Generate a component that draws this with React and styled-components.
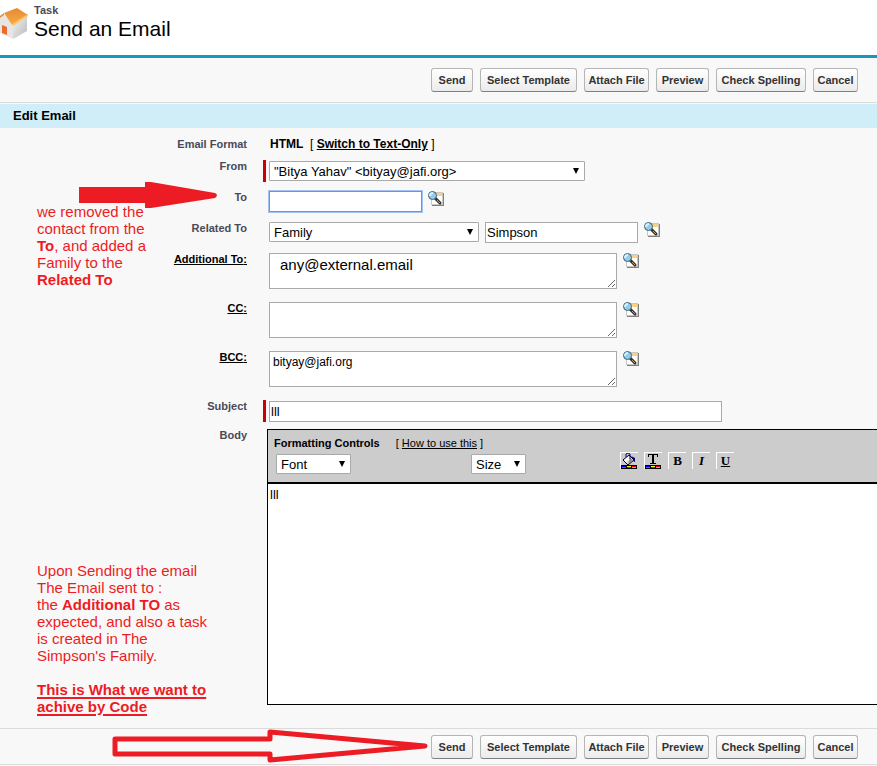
import styled, { createGlobalStyle } from "styled-components";

const GlobalStyle = createGlobalStyle`
  *, *::before, *::after {
    box-sizing: border-box;
  }

  body {
    margin: 0;
    background: #f8f8f8;
    color: #000;
    font-family: Arial, "Liberation Sans", sans-serif;
    font-size: 12px;
  }

  button, input, select, textarea {
    margin: 0;
    font-family: inherit;
  }
`;

const RED = "#ed1c24";

const PageHeader = styled.header`
  display: flex;
  align-items: flex-start;
  gap: 6px;
  height: 58px;
  padding-top: 4px;
  background: #fff;
  border-bottom: 3px solid #1797c0;
`;

const HouseSvg = styled.svg`
  flex: none;
  width: 28px;
  height: 36px;
`;

const PageType = styled.div`
  font-size: 11px;
  font-weight: bold;
  line-height: 13px;
  color: #4a4a56;
`;

const PageTitle = styled.h1`
  margin: 0;
  font-size: 21px;
  font-weight: normal;
  line-height: 24px;
`;

const ButtonBar = styled.div`
  position: relative;
  display: flex;
  justify-content: flex-end;
  gap: 7px;
  padding: ${({ $bottom }) => ($bottom ? "6px 19px 5px" : "10px 19px")};
  border-top: ${({ $bottom }) => ($bottom ? "1px solid #dbdbdb" : "none")};
  border-bottom: 1px solid #dbdbdb;
`;

const BarButton = styled.button`
  height: 24px;
  min-width: ${({ $width }) => $width}px;
  padding: 0 3px;
  border: 1px solid #b5b5b5;
  border-bottom-color: #7f7f7f;
  border-radius: 3px;
  background: linear-gradient(#fff, #ebebeb);
  color: #333;
  font-size: 11px;
  font-weight: bold;
  white-space: nowrap;
`;

const SectionTitle = styled.h2`
  margin: 1px 0 0;
  padding: 0 13px;
  background: #cfeef8;
  font-size: 13px;
  line-height: 24px;
`;

const Form = styled.form`
  position: relative;
  padding: 10px 0 23px;
`;

const Row = styled.div`
  display: grid;
  grid-template-columns: 247px minmax(0, 1fr);
  column-gap: 16px;
  min-height: ${({ $height }) => $height || 22}px;
  margin-bottom: ${({ $space = 9 }) => $space}px;
`;

const Label = styled.label`
  color: #4a4a56;
  font-size: 11px;
  font-weight: bold;
  line-height: 13px;
  text-align: right;
`;

const LabelLink = styled.a`
  color: #000;
`;

const Field = styled.div`
  display: flex;
  align-items: ${({ $required }) => ($required ? "center" : "flex-start")};
  gap: 6px;
  padding-left: ${({ $wide }) => ($wide ? 1 : 3)}px;
  border-left: 3px solid ${({ $required }) => ($required ? "#c00" : "transparent")};
`;

const Format = styled.div`
  padding-left: 1px;
  font-weight: bold;
  line-height: 13px;

  span {
    font-weight: normal;
  }

  a {
    color: #000;
  }
`;

const SelectBox = styled.span`
  position: relative;
  display: block;
  width: ${({ $width }) => $width}px;

  &::after {
    content: "";
    position: absolute;
    top: 7px;
    right: 6px;
    border: 3px solid transparent;
    border-top: 6px solid #000;
    border-bottom: 0;
    pointer-events: none;
  }

  select {
    display: block;
    width: 100%;
    height: 20px;
    padding: 0 16px 0 4px;
    border: 1px solid #a9a9a9;
    border-radius: 1px;
    background: #fff;
    color: #000;
    font-size: 13px;
    appearance: none;
  }
`;

const Input = styled.input`
  width: ${({ $width }) => $width}px;
  max-width: 100%;
  height: 21px;
  padding: 0 1px;
  border: 1px solid ${({ $active }) => ($active ? "#6a94d8" : "#a9a9a9")};
  box-shadow: ${({ $active }) => ($active ? "0 0 0 1px #a5c3f3" : "none")};
  background: #fff;
  color: #000;
  font-size: 13px;
`;

const Recipients = styled.textarea`
  width: 348px;
  height: 36px;
  padding: ${({ $large }) => ($large ? "3px 10px" : "2px 3px")};
  border: 1px solid #a9a9a9;
  background: #fff;
  color: #000;
  font-size: ${({ $large }) => ($large ? 15 : 12)}px;
  line-height: 16px;
  overflow: hidden;
`;

const IconButton = styled.button`
  flex: none;
  width: 16px;
  height: 16px;
  padding: 0;
  border: 0;
  background: none;

  svg {
    display: block;
  }
`;

const Editor = styled.div`
  flex: 1;
  min-width: 0;
  border: 1px solid #000;
  border-right: 0;
`;

const Toolbar = styled.div`
  padding: 6px 0 8px;
  background: #ccc;
  border-bottom: 2px solid #000;
`;

const ToolbarTitle = styled.div`
  display: flex;
  gap: 16px;
  padding: 0 6px;
  font-size: 11px;
  line-height: 14px;

  a {
    color: #000;
  }
`;

const Controls = styled.div`
  display: grid;
  grid-template-columns: 195px 149px auto;
  height: 24px;
  padding: 2px 8px 0;

  > span {
    align-self: end;
  }
`;

const Formats = styled.div`
  display: flex;
  gap: 6px;
`;

const FormatButton = styled.button`
  width: 18px;
  height: 17px;
  padding: 0;
  border: 0;
  border-top: 1px solid #fff;
  border-left: 1px solid #fff;
  background: none;
  color: #000;
  font-family: "Liberation Serif", serif;
  font-size: 13px;
  font-weight: bold;
  font-style: ${({ $italic }) => ($italic ? "italic" : "normal")};
  line-height: 16px;
  text-decoration: ${({ $underline }) => ($underline ? "underline" : "none")};

  svg {
    display: block;
  }
`;

const Message = styled.textarea`
  display: block;
  width: 100%;
  height: 220px;
  padding: 3px 2px;
  border: 0;
  background: #fff;
  color: #000;
  font-size: 13px;
  line-height: 15px;
  resize: none;
`;

const Note = styled.div`
  position: absolute;
  top: ${({ $top }) => $top}px;
  left: 37px;
  color: ${RED};
  font-size: 15px;
  line-height: 17px;
  white-space: nowrap;

  p {
    margin: 0 0 17px;
  }

  u {
    font-weight: bold;
    text-decoration-thickness: 2px;
    text-underline-offset: 2px;
  }
`;

const Arrow = styled.svg`
  position: absolute;
  top: ${({ $top }) => $top}px;
  left: ${({ $left }) => $left}px;
  pointer-events: none;
`;

const actions = [
  ["Send", 42],
  ["Select Template", 97],
  ["Attach File", 65],
  ["Preview", 53],
  ["Check Spelling", 90],
  ["Cancel", 45],
];

function Actions() {
  return actions.map(([name, width]) => (
    <BarButton key={name} type="button" $width={width}>
      {name}
    </BarButton>
  ));
}

function HouseIcon() {
  return (
    <HouseSvg viewBox="0 0 28 36" aria-hidden="true">
      <defs>
        <linearGradient id="roof" x1="0" y1="0" x2="0" y2="1">
          <stop offset="0" stopColor="#e58a30" />
          <stop offset="1" stopColor="#f9ab48" />
        </linearGradient>
        <linearGradient id="wall" x1="0" y1="0" x2="1" y2="1">
          <stop offset="0" stopColor="#f2f2f2" />
          <stop offset="1" stopColor="#b9b9b9" />
        </linearGradient>
      </defs>
      <path d="M0 14 4 10 13 21V35L0 29Z" fill="#e6e6e6" />
      <path d="M13 20 27 12V27L13 35Z" fill="url(#wall)" />
      <path d="M2 21 7 23V31L2 29Z" fill="#ee6a2c" />
      <path d="M4 9 17 4 28 11 12 21Z" fill="url(#roof)" />
      <path d="M4 9 0 12V14L4 11Z" fill="#e8893a" />
      <path d="M12 20 28 10V12L13 22Z" fill="#ffc468" />
    </HouseSvg>
  );
}

function Lookup({ name }) {
  return (
    <IconButton type="button" aria-label={`${name} lookup`}>
      <svg width="16" height="16" viewBox="0 0 16 16">
        <path d="M4 2H16V15H4Z" fill="#808080" />
        <path d="M3 1H15V14H3Z" fill="#c8c8c8" />
        <path d="M4 2H14V13H4Z" fill="#fff" />
        <path d="M8 2H14V5H8Z" fill="#ffd07a" />
        <path d="M7 7 12 12" stroke="#33302c" strokeWidth="3" strokeLinecap="round" />
        <path d="M9 9 12 12" stroke="#d09a58" strokeWidth="1" />
        <circle cx="4.5" cy="4.5" r="4" fill="#93cbea" stroke="#416078" />
        <path d="M2 5Q2 2 5 2" fill="none" stroke="#d9f0fb" strokeWidth="2" />
      </svg>
    </IconButton>
  );
}

function ColorStrip() {
  return (
    <>
      <path d="M0 12H16V16H0Z" fill="#000" />
      <path d="M1 13H5V14H1Z" fill="#00f" />
      <path d="M1 14H5V15H1Z" fill="#f0f" />
      <path d="M6 13H10V14H6Z" fill="#ff0" />
      <path d="M6 14H10V15H6Z" fill="#008000" />
      <path d="M11 13H15V14H11Z" fill="#f00" />
      <path d="M11 14H15V15H11Z" fill="#0ff" />
    </>
  );
}

function FillIcon() {
  return (
    <svg width="16" height="16" viewBox="0 0 16 16">
      <path d="M2 7 8 2 13 7 7 12Z" fill="#ddd" stroke="#000" />
      <path d="M3 7 7 4 9 6 5 9Z" fill="#fff" />
      <path d="M7 11 12 7 9 5Z" fill="#888" />
      <path d="M5 4V1L7 0 9 1V6" fill="none" stroke="#000080" />
      <path d="M10 3 14 5V9L12 8V6Z" fill="#000080" />
      <ColorStrip />
    </svg>
  );
}

function TextColorIcon() {
  return (
    <svg width="16" height="16" viewBox="0 0 16 16" shapeRendering="crispEdges">
      <path d="M3 1H13V4H12V2H9V10H11V11H5V10H7V2H4V4H3Z" fill="#000" />
      <ColorStrip />
    </svg>
  );
}

function Select({ id, label, width, value }) {
  return (
    <SelectBox $width={width}>
      <select id={id} aria-label={label}>
        <option>{value}</option>
      </select>
    </SelectBox>
  );
}

function RecipientRow({ id, label, value, large }) {
  return (
    <Row $height={40}>
      <Label htmlFor={id}>
        <LabelLink href={`#${id}`}>{label}:</LabelLink>
      </Label>
      <Field>
        <Recipients id={id} defaultValue={value} $large={large} spellCheck={false} />
        <Lookup name={label} />
      </Field>
    </Row>
  );
}

export default function App() {
  return (
    <>
      <GlobalStyle />
      <PageHeader>
        <HouseIcon />
        <div>
          <PageType>Task</PageType>
          <PageTitle>Send an Email</PageTitle>
        </div>
      </PageHeader>
      <main>
        <ButtonBar>
          <Actions />
        </ButtonBar>
        <SectionTitle>Edit Email</SectionTitle>

        <Form>
          <Row $height={13}>
            <Label as="span">Email Format</Label>
            <Field>
              <Format>
                HTML&nbsp; <span>[</span> <a href="#text">Switch to Text-Only</a> <span>]</span>
              </Format>
            </Field>
          </Row>
          <Row>
            <Label htmlFor="from">From</Label>
            <Field $required>
              <Select id="from" width={316} value={'"Bitya Yahav" <bityay@jafi.org>'} />
            </Field>
          </Row>
          <Row>
            <Label htmlFor="to">To</Label>
            <Field>
              <Input id="to" $width={153} $active />
              <Lookup name="To" />
            </Field>
          </Row>
          <Row>
            <Label htmlFor="related">Related To</Label>
            <Field>
              <Select id="related" width={210} value="Family" />
              <Input aria-label="Related record" $width={153} defaultValue="Simpson" />
              <Lookup name="Related To" />
            </Field>
          </Row>
          <RecipientRow id="additional" label="Additional To" value="any@external.email" large />
          <RecipientRow id="cc" label="CC" value="" />
          <RecipientRow id="bcc" label="BCC" value="bityay@jafi.org" />
          <Row $space={7}>
            <Label htmlFor="subject">Subject</Label>
            <Field $required>
              <Input id="subject" $width={453} defaultValue="lll" />
            </Field>
          </Row>
          <Row $space={0}>
            <Label htmlFor="body">Body</Label>
            <Field $wide>
              <Editor>
                <Toolbar>
                  <ToolbarTitle>
                    <b>Formatting Controls</b>
                    <span>
                      [ <a href="#help">How to use this</a> ]
                    </span>
                  </ToolbarTitle>
                  <Controls>
                    <Select label="Font" width={75} value="Font" />
                    <Select label="Size" width={55} value="Size" />
                    <Formats>
                      <FormatButton type="button" aria-label="Background color">
                        <FillIcon />
                      </FormatButton>
                      <FormatButton type="button" aria-label="Text color">
                        <TextColorIcon />
                      </FormatButton>
                      <FormatButton type="button">B</FormatButton>
                      <FormatButton type="button" $italic>I</FormatButton>
                      <FormatButton type="button" $underline>U</FormatButton>
                    </Formats>
                  </Controls>
                </Toolbar>
                <Message id="body" defaultValue="lll" spellCheck={false} />
              </Editor>
            </Field>
          </Row>

          <Arrow $top={54} $left={79} width="139" height="28" viewBox="0 0 139 28" aria-hidden="true">
            <path d="M0 5H66V0H72L136 11Q140 13 136 16L72 26H66V21H0Z" fill={RED} />
          </Arrow>
          <Note $top={75}>
            we removed the
            <br />
            contact from the
            <br />
            <b>To</b>, and added a
            <br />
            Family to the
            <br />
            <b>Related To</b>
          </Note>
          <Note $top={434}>
            <p>
              Upon Sending the email
              <br />
              The Email sent to :
              <br />
              the <b>Additional TO</b> as
              <br />
              expected, and also a task
              <br />
              is created in The
              <br />
              Simpson&apos;s Family.
            </p>
            <u>
              This is What we want to
              <br />
              achive by Code
            </u>
          </Note>
        </Form>

        <ButtonBar $bottom>
          <Actions />
          <Arrow $top={0} $left={112} width="318" height="34" viewBox="0 0 318 34" aria-hidden="true">
            <path
              d="M3 10H158V3L313 17 158 31V25H3Z"
              fill="none"
              stroke={RED}
              strokeWidth="5"
              strokeLinejoin="round"
            />
          </Arrow>
        </ButtonBar>
      </main>
    </>
  );
}
